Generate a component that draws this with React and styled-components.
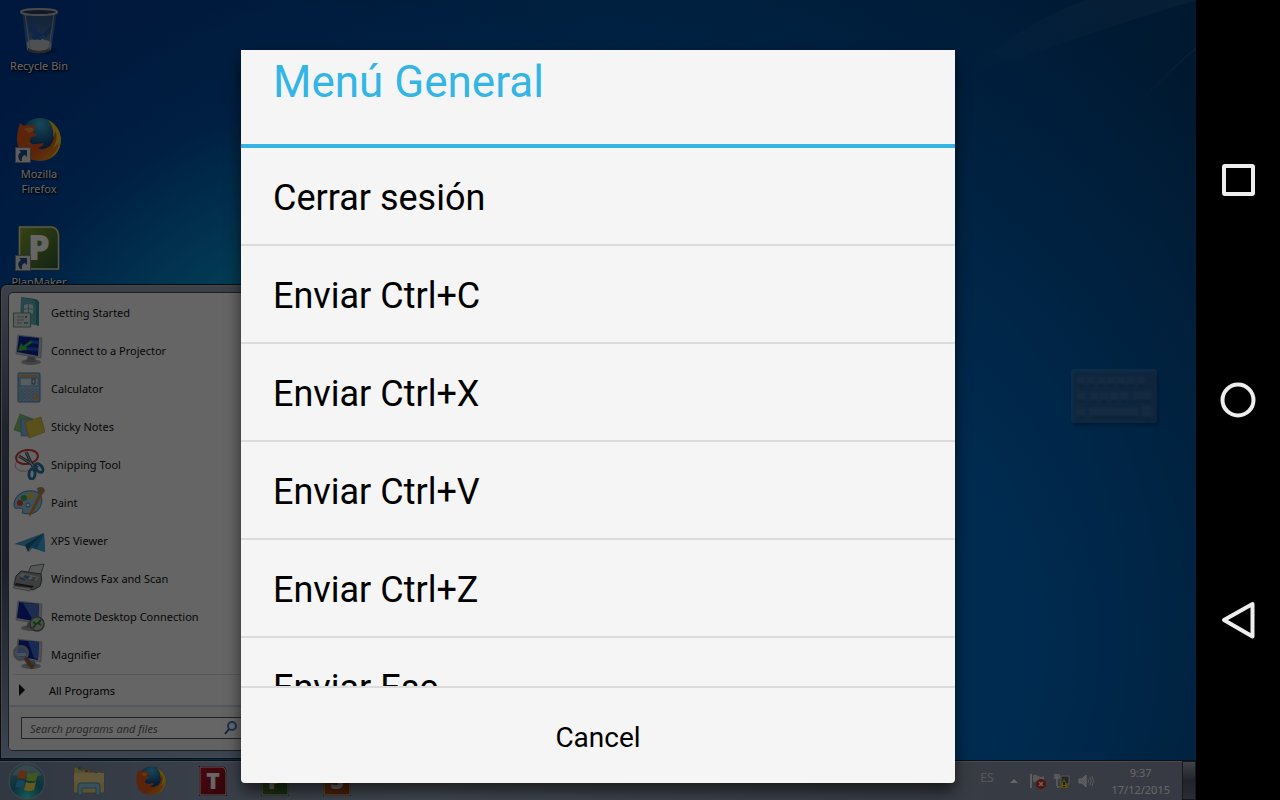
import { useState } from "react";
import styled, { createGlobalStyle } from "styled-components";

const desktopItems = [
  { label: "Recycle Bin", icon: <BinIcon /> },
  { label: "Mozilla Firefox", icon: <FirefoxIcon size={48} />, shortcut: true },
  {
    label: "PlanMaker",
    icon: <OfficeIcon size={48} letter="P" from="#8aa82c" to="#2c5a34" />,
    shortcut: true,
  },
];

const programs = [
  { label: "Getting Started", icon: <GettingStartedIcon /> },
  { label: "Connect to a Projector", icon: <ProjectorIcon /> },
  { label: "Calculator", icon: <CalculatorIcon /> },
  { label: "Sticky Notes", icon: <NotesIcon /> },
  { label: "Snipping Tool", icon: <SnippingIcon /> },
  { label: "Paint", icon: <PaintIcon /> },
  { label: "XPS Viewer", icon: <XpsIcon /> },
  { label: "Windows Fax and Scan", icon: <FaxIcon /> },
  { label: "Remote Desktop Connection", icon: <RemoteIcon /> },
  { label: "Magnifier", icon: <MagnifierIcon /> },
];

const actions = [
  "Cerrar sesión",
  "Enviar Ctrl+C",
  "Enviar Ctrl+X",
  "Enviar Ctrl+V",
  "Enviar Ctrl+Z",
  "Enviar Esc",
];

export default function App() {
  const [query, setQuery] = useState("");

  return (
    <Device>
      <GlobalStyle />
      <Screen>
        <Desktop>
          <IconColumn>
            {desktopItems.map((item) => (
              <DesktopItem key={item.label}>
                <IconFrame>
                  {item.icon}
                  {item.shortcut && (
                    <Shortcut>
                      <ShortcutIcon />
                    </Shortcut>
                  )}
                </IconFrame>
                <span>{item.label}</span>
              </DesktopItem>
            ))}
          </IconColumn>
          <LightRays />
          <KeyboardButton aria-label="Keyboard">
            <KeyboardIcon />
          </KeyboardButton>
          <StartMenu>
            <ProgramPanel>
              <ProgramList>
                {programs.map((program) => (
                  <li key={program.label}>
                    <Program>
                      {program.icon}
                      {program.label}
                    </Program>
                  </li>
                ))}
              </ProgramList>
              <AllPrograms>
                <svg width="6" height="12" viewBox="0 0 6 12">
                  <path d="M0 0L6 6L0 12Z" fill="#111" />
                </svg>
                All Programs
              </AllPrograms>
              <SearchArea>
                <SearchBox>
                  <input
                    type="text"
                    aria-label="Search programs and files"
                    placeholder="Search programs and files"
                    value={query}
                    onChange={(e) => setQuery(e.target.value)}
                  />
                  <svg width="14" height="14" viewBox="0 0 14 14" fill="none">
                    <circle cx="8" cy="5" r="4" stroke="#3d83c4" strokeWidth="2" />
                    <path d="M5 8L1 13" stroke="#2a559c" strokeWidth="2" />
                  </svg>
                </SearchBox>
              </SearchArea>
            </ProgramPanel>
          </StartMenu>
        </Desktop>
        <Taskbar>
          <StartButton aria-label="Start">
            <OrbIcon />
          </StartButton>
          <TaskButton aria-label="Explorer">
            <FolderIcon />
          </TaskButton>
          <TaskButton aria-label="Firefox">
            <FirefoxIcon size={32} />
          </TaskButton>
          <TaskButton aria-label="TextMaker">
            <OfficeIcon size={32} letter="T" from="#b81428" to="#78101c" />
          </TaskButton>
          <TaskButton aria-label="PlanMaker">
            <OfficeIcon size={32} letter="P" from="#66902c" to="#3c6a34" />
          </TaskButton>
          <TaskButton aria-label="Presentations">
            <OfficeIcon size={32} letter="S" from="#e8681c" to="#a8481c" />
          </TaskButton>
          <Tray>
            <Language>ES</Language>
            <TrayIcons>
              <svg width="8" height="4" viewBox="0 0 8 4">
                <path d="M4 0L8 4H0Z" fill="#fff" />
              </svg>
              <FlagIcon />
              <NetworkIcon />
              <SpeakerIcon />
            </TrayIcons>
            <Clock>
              <span>9:37</span>
              <span>17/12/2015</span>
            </Clock>
            <ShowDesktop aria-label="Show desktop" />
          </Tray>
        </Taskbar>
        <Dim>
          <Dialog role="dialog" aria-labelledby="menu-title">
            <Title id="menu-title">Menú General</Title>
            <ActionList>
              {actions.map((action) => (
                <li key={action}>
                  <Action>{action}</Action>
                </li>
              ))}
            </ActionList>
            <Cancel>Cancel</Cancel>
          </Dialog>
        </Dim>
      </Screen>
      <NavBar>
        <NavButton aria-label="Recent">
          <svg width="36" height="36" viewBox="0 0 36 36" fill="none">
            <rect x="4" y="4" width="29" height="28" rx="1" stroke="#eee" strokeWidth="4" />
          </svg>
        </NavButton>
        <NavButton aria-label="Home">
          <svg width="36" height="36" viewBox="0 0 36 36" fill="none">
            <circle cx="18" cy="18" r="15.5" stroke="#eee" strokeWidth="4" />
          </svg>
        </NavButton>
        <NavButton aria-label="Back">
          <svg width="36" height="40" viewBox="0 0 36 40" fill="none">
            <path
              d="M4 20L32.5 4V36.500Z"
              stroke="#eee"
              strokeWidth="4"
              strokeLinejoin="round"
            />
          </svg>
        </NavButton>
      </NavBar>
    </Device>
  );
}

function BinIcon() {
  return (
    <svg width="48" height="48" viewBox="-1 0 48 48">
      <defs>
        <linearGradient id="bin" x1="0" y1="0" x2="0" y2="1">
          <stop offset="0" stopColor="#2c5484" />
          <stop offset="0.7" stopColor="#4878b0" />
          <stop offset="1" stopColor="#a0b0c4" />
        </linearGradient>
      </defs>
      <ellipse cx="27" cy="42" rx="14" ry="4" fill="#000" opacity="0.25" />
      <path d="M6 4L11 42Q23 48 35 42L41 4Z" fill="url(#bin)" />
      <path d="M11 35Q14 30 19 32Q25 29 29 32Q34 32 35 36L34 42Q23 47 12 42Z" fill="#c4c8cc" />
      <path d="M12 40Q23 46 34 40L34 43Q23 48 12 43Z" fill="#666" />
      <path d="M13 17Q19 13 20 20L22 24L28 25L25 32L16 31L17 25Q11 24 13 17Z" fill="#2860b4" />
      <path d="M37 15L27 26L30 30L36 20Z" fill="#2c5894" />
      <path d="M9 6L14 40M38 6L33 40" stroke="#90a8c4" strokeWidth="1" fill="none" />
      <ellipse cx="23" cy="4" rx="18" ry="3" fill="#28405c" stroke="#b8bcc0" strokeWidth="2" />
    </svg>
  );
}

function FirefoxIcon({ size }) {
  return (
    <svg width={size} height={size} viewBox="0 0 48 48">
      <defs>
        <linearGradient id="fox" x1="0" y1="0" x2="1" y2="1">
          <stop offset="0" stopColor="#e8601c" />
          <stop offset="0.6" stopColor="#e4581c" />
          <stop offset="1" stopColor="#f0b01c" />
        </linearGradient>
        <radialGradient id="globe" cx="0.5" cy="0.15" r="0.8">
          <stop offset="0" stopColor="#3cb4d8" />
          <stop offset="0.6" stopColor="#14508c" />
          <stop offset="1" stopColor="#102c60" />
        </radialGradient>
      </defs>
      <circle cx="25" cy="22" r="20" fill="url(#globe)" />
      <path
        d="M5 7L9 10Q14 8 18 10L19 8L20 14Q18 15 18 17L22 18Q22 20 17 21Q14 23 15 26Q17 29 21 28L28 27Q30 29 23 32Q28 35 35 30Q41 23 38 14L34 5Q45 11 46 23Q45 44 25 45Q4 44 2 25Q2 15 5 7Z"
        fill="url(#fox)"
      />
      <path
        d="M33 4Q40 12 38 21Q41 17 40 14Q44 23 38 32Q43 29 44 25Q43 37 34 42Q46 37 46 22Q44 9 33 4Z"
        fill="#f4cc28"
      />
      <path d="M9 13Q15 10 19 13Q17 16 14 17Z" fill="#f48c3c" />
    </svg>
  );
}

function OfficeIcon({ size, letter, from, to }) {
  const id = `office-${letter}-${size}`;
  return (
    <OfficeSvg width={size} height={size} viewBox="0 0 32 32">
      <defs>
        <linearGradient id={id} x1="0" y1="0" x2="1" y2="1">
          <stop offset="0" stopColor={from} />
          <stop offset="1" stopColor={to} />
        </linearGradient>
      </defs>
      <path d="M2 1H24Q29 1 30 7V31H2Z" fill={to} />
      <path d="M3 2H24Q28 2 29 7V30H3Z" fill={`url(#${id})`} stroke="#ddd" strokeWidth="1" />
      <text
        x="16"
        y="24"
        textAnchor="middle"
        fontFamily="Open Sans"
        fontWeight="800"
        fontSize="23"
        fill="#fff"
      >
        {letter}
      </text>
    </OfficeSvg>
  );
}

function ShortcutIcon() {
  return (
    <svg width="16" height="16" viewBox="0 0 16 16">
      <rect x="0.5" y="0.5" width="15" height="15" fill="#e8e8e8" stroke="#888" />
      <path
        d="M5 14Q1 8 6 5L4 3H12V10L10 8Q6 9 7 14Z"
        fill="#244f8c"
      />
    </svg>
  );
}

function GettingStartedIcon() {
  return (
    <svg width="32" height="32" viewBox="0 0 32 32">
      <path d="M8 1L22 3Q27 4 26 9V30L20 28L8 31Z" fill="#2c98a0" />
      <path d="M8 1L20 4Q23 5 23 9V29L7 26Z" fill="#68acb8" />
      <path d="M11 9L15 8V12L11 13ZM16 8L20 9V13L16 12ZM11 14L15 13V17L11 17ZM16 13L20 14V18L16 17Z" fill="#d0ecec" />
      <rect x="0.500" y="17" width="17" height="14" fill="#dce4e0" stroke="#609c80" />
      <path d="M4 21H11M4 24H11M4 27H9" stroke="#999" />
      <rect x="11" y="26" width="4" height="2" fill="#38b0e0" />
      <rect x="12" y="20" width="2" height="2" fill="#777" />
    </svg>
  );
}

function ScreenShape() {
  return (
    <>
      <ellipse cx="18" cy="28" rx="10" ry="3" fill="#a4a8ac" />
      <path d="M15 22L22 23L23 28H13Z" fill="#888c90" />
      <path d="M5 1L29 4L28 24L3 20Z" fill="#c4c8cc" stroke="#8c9094" strokeWidth="0.6" />
      <path d="M6 2L26 4L25 22L4 18Z" fill="#1024a0" />
    </>
  );
}

function ProjectorIcon() {
  return (
    <svg width="32" height="32" viewBox="0 0 32 32">
      <ScreenShape />
      <path d="M17 6L26 7V10L15 9ZM13 13L25 14V17L13 16Z" fill="#1460d0" />
      <path d="M20 8L13 13L14 16L5 17L8 9L10 12L17 7Z" fill="#3cc83c" />
    </svg>
  );
}

function CalculatorIcon() {
  return (
    <svg width="32" height="32" viewBox="0 0 32 32">
      <rect x="5" y="1" width="22" height="29" rx="1" fill="#a0c8e4" stroke="#4880ac" />
      <rect x="7" y="3" width="18" height="2" fill="#e8a030" />
      <rect x="7" y="6" width="18" height="8" fill="#d8e8f0" stroke="#6898bc" />
      <rect x="19" y="7" width="3" height="5" fill="none" stroke="#38689c" />
      {[17, 20, 23, 26].map((y) =>
        [7, 11, 15, 19, 23].map((x) => (
          <rect key={`${x}-${y}`} x={x} y={y} width="2" height="2" fill="#e0e8f0" stroke="#5888b0" strokeWidth="0.6" />
        ))
      )}
      <rect x="22" y="23" width="3" height="5" fill="#e8a030" />
    </svg>
  );
}

function NotesIcon() {
  return (
    <svg width="32" height="32" viewBox="0 0 32 32">
      <path d="M7 4L20 9L14 24L1 20Z" fill="#88c478" stroke="#5ca45c" strokeWidth="0.6" />
      <path d="M8 9H20V26H8Z" fill="#88b8e4" stroke="#4c88c0" strokeWidth="0.6" />
      <path d="M12 12L28 7L32 22L16 28Z" fill="#e0c848" stroke="#b09828" strokeWidth="0.6" />
    </svg>
  );
}

function SnippingIcon() {
  return (
    <svg width="32" height="32" viewBox="0 0 32 32" fill="none">
      <path d="M4 13Q-1 20 8 23Q13 24 17 22" stroke="#e09c9c" strokeWidth="1" />
      <ellipse cx="14" cy="9" rx="11" ry="7" fill="#fff" fillOpacity="0.4" stroke="#d43c3c" strokeWidth="2" transform="rotate(-8 14 9)" />
      <path d="M13 4L21 21M6 8L25 20" stroke="#4c545c" strokeWidth="3" />
      <path d="M13 4L21 21M6 8L25 20" stroke="#b0b8c0" strokeWidth="1" />
      <ellipse cx="26" cy="20" rx="5" ry="3" transform="rotate(50 26 20)" stroke="#2878b0" strokeWidth="3" />
      <ellipse cx="19" cy="26" rx="3" ry="5" transform="rotate(5 19 26)" stroke="#2878b0" strokeWidth="3" />
    </svg>
  );
}

function PaintIcon() {
  return (
    <svg width="32" height="32" viewBox="0 0 32 32">
      <path d="M14 5Q29 3 29 15Q27 28 15 28L9 27Q12 22 6 22Q0 24 1 17Q3 7 14 5Z" fill="#9cc8e4" stroke="#4488b0" />
      <circle cx="7" cy="17" r="3" fill="#d44830" />
      <circle cx="11" cy="12" r="3" fill="#48a83c" />
      <circle cx="18" cy="10" r="3" fill="#f0c028" />
      <circle cx="15" cy="19" r="2" fill="#e8f4fc" stroke="#4488b0" />
      <path d="M26 8L29 9L19 28L16 31L17 26Z" fill="#d88828" />
      <path d="M24 2Q31 -1 32 5L29 9L25 8Z" fill="#b08860" />
    </svg>
  );
}

function XpsIcon() {
  return (
    <svg width="32" height="32" viewBox="0 0 32 32">
      <path d="M12 22L16 28L21 22Z" fill="#98a4ac" />
      <path d="M1 20L31 9L16 23Z" fill="#48a4d4" />
      <path d="M31 9L16 23L32 28Z" fill="#2888c4" />
      <path d="M31 9L12 21L15 28L17 23Z" fill="#186894" />
      <path d="M31 9L24 25L32 28Z" fill="#3ca8dc" />
    </svg>
  );
}

function FaxIcon() {
  return (
    <svg width="32" height="32" viewBox="0 0 32 32">
      <path d="M18 4L31 2L27 15L15 11Z" fill="#d8dcdc" stroke="#777" />
      <path d="M3 14L8 9L28 12Q30 18 27 24L20 28L1 23Z" fill="#989ca0" stroke="#555" />
      <path d="M6 14L9 11L26 15L23 19Z" fill="#c4c8cc" />
      <path d="M12 13L17 14L15 17L10 15Z" fill="#3888c0" />
      <path d="M3 21L21 24L19 26L2 23Z" fill="#333" />
      <path d="M1 24L18 26L17 29L0 26Z" fill="#d0d4d4" stroke="#666" strokeWidth="0.5" />
      <path d="M19 16H23M18 18H22M7 16L12 18" stroke="#555" />
    </svg>
  );
}

function RemoteIcon() {
  return (
    <svg width="32" height="32" viewBox="0 0 32 32">
      <ScreenShape />
      <path d="M10 3L26 4L25 21L20 20Z" fill="#4870cc" />
      <circle cx="24" cy="24" r="7" fill="#b8c0b8" stroke="#667068" strokeWidth="1.500" />
      <path d="M20 22L23 24L20 28M28 20L25 23L28 25" stroke="#289030" strokeWidth="2" fill="none" />
    </svg>
  );
}

function MagnifierIcon() {
  return (
    <svg width="32" height="32" viewBox="0 0 32 32">
      <ScreenShape />
      <path d="M15 3L26 4L25 21L21 20Z" fill="#3c6cd4" />
      <circle cx="8" cy="15" r="7" fill="#90b0e0" fillOpacity="0.8" stroke="#a0a4a8" strokeWidth="2" />
      <path d="M3 15H13V18H4Z" fill="#b0c8ec" />
      <path d="M13 21L19 29" stroke="#986444" strokeWidth="4" strokeLinecap="round" />
    </svg>
  );
}

function OrbIcon() {
  return (
    <svg width="38" height="38" viewBox="0 0 38 38">
      <defs>
        <radialGradient id="orb" cx="0.5" cy="0.95" r="0.9">
          <stop offset="0" stopColor="#38e0d8" />
          <stop offset="0.5" stopColor="#1c7c94" />
          <stop offset="1" stopColor="#6c9cac" />
        </radialGradient>
      </defs>
      <circle cx="19" cy="19" r="18" fill="url(#orb)" stroke="#a0b4bc" strokeWidth="1" />
      <path d="M4 13Q19 -7 34 13Q27 16 19 15Q11 14 4 13Z" fill="#fff" opacity="0.3" />
      <path d="M11 9Q15 7 19 10L17 18Q13 15 9 17Z" fill="#f47434" />
      <path d="M20 11Q25 13 30 10L28 19Q22 20 18 18Z" fill="#a4dc48" />
      <path d="M9 19Q13 16 17 20L15 27Q11 24 7 26Z" fill="#40a8e4" />
      <path d="M18 20Q22 22 28 20L26 28Q20 30 16 28Z" fill="#fcdc4c" />
    </svg>
  );
}

function FolderIcon() {
  return (
    <svg width="32" height="32" viewBox="0 0 32 32">
      <path d="M1 3L5 2L6 5H11L12 4L16 5V7H22L23 6L28 7V9H31V28H1Z" fill="#d8c478" stroke="#98844c" strokeWidth="0.6" />
      <path d="M5 2H8V4H5Z" fill="#28a838" />
      <path d="M12 5H15V7H12Z" fill="#d45838" />
      <path d="M22 7H25V9H22Z" fill="#3888d4" />
      <path d="M1 8H31V27H1Z" fill="#f0dc90" />
      <path d="M1 17H31V27H1Z" fill="#dcc878" opacity="0.6" />
      <path d="M5 30V21Q5 18 8 18H24Q27 18 27 21V30H23V23H9V30Z" fill="#90c8e4" stroke="#4c94bc" />
    </svg>
  );
}

function FlagIcon() {
  return (
    <svg width="16" height="16" viewBox="0 0 16 16">
      <path d="M1 1V15" stroke="#eee" strokeWidth="2" />
      <path d="M3 2Q6 1 8 3Q11 5 14 3V10Q11 11 8 9Q6 8 3 9Z" fill="#ddd" />
      <circle cx="11" cy="11" r="5" fill="#d42c20" />
      <path d="M9 9L13 13M13 9L9 13" stroke="#fff" strokeWidth="1.500" />
    </svg>
  );
}

function NetworkIcon() {
  return (
    <svg width="16" height="16" viewBox="0 0 16 16" fill="none">
      <path d="M1 1V5H5V1M3 1V13M3 14H8" stroke="#eee" strokeWidth="1.500" />
      <path d="M7 3H15V11H7Z" stroke="#ddd" fill="#555c66" />
      <path d="M10 6L15 15H5Z" fill="#f0d020" stroke="#a89010" strokeWidth="0.5" />
      <path d="M10 9V12M10 13V14" stroke="#222" strokeWidth="1.500" />
    </svg>
  );
}

function SpeakerIcon() {
  return (
    <svg width="16" height="16" viewBox="0 0 16 16" fill="none">
      <path d="M1 6H4L8 2V14L4 10H1Z" fill="#ddd" stroke="#fff" />
      <path d="M10 6Q11 8 10 10M12 4Q14 8 12 12M14 3Q17 8 14 13" stroke="#ddd" />
    </svg>
  );
}

function KeyboardIcon() {
  return (
    <svg width="96" height="64" viewBox="0 0 96 64">
      <defs>
        <filter id="soft">
          <feGaussianBlur stdDeviation="1" />
        </filter>
      </defs>
      <rect x="7" y="8" width="86" height="54" rx="3" fill="#001840" opacity="0.3" filter="url(#soft)" />
      <rect x="5" y="5" width="86" height="54" rx="3" fill="#7aa0c8" opacity="0.3" />
      <g fill="#a0c0e0" opacity="0.12" filter="url(#soft)">
        {[11, 21, 31, 41, 51, 61, 71].map((x) => (
          <rect key={x} x={x} y="13" width="8" height="8" rx="1" />
        ))}
        {[11, 24, 34, 44, 54].map((x) => (
          <rect key={x} x={x} y="28" width="8" height="9" rx="1" />
        ))}
        <rect x="68" y="28" width="17" height="9" rx="1" />
        <rect x="11" y="44" width="8" height="9" rx="1" />
        <rect x="23" y="44" width="49" height="9" rx="1" />
        <rect x="76" y="42" width="10" height="12" rx="1" />
      </g>
      <path
        d="M12 21H18M22 21H28M32 21H38M42 21H48M52 21H58M62 21H68M72 21H78M12 37H18M25 37H31M35 37H41M45 37H51M55 37H61M69 37H84M12 53H18M24 53H71M77 54H85"
        stroke="#002050"
        strokeWidth="2"
        opacity="0.3"
        filter="url(#soft)"
      />
    </svg>
  );
}

function LightRays() {
  return (
    <RaysSvg width="300" height="160" viewBox="0 0 300 160" fill="none">
      <defs>
        <linearGradient id="ray" x1="0" y1="1" x2="1" y2="0">
          <stop offset="0" stopColor="#7ab0d0" stopOpacity="0" />
          <stop offset="1" stopColor="#7ab0d0" stopOpacity="0.15" />
        </linearGradient>
      </defs>
      <path d="M60 80Q130 20 190 0H300Q170 40 60 80Z" fill="url(#ray)" />
      <path d="M240 106Q270 74 300 48" stroke="url(#ray)" strokeWidth="2" />
    </RaysSvg>
  );
}

const GlobalStyle = createGlobalStyle`
  * {
    box-sizing: border-box;
  }

  body {
    margin: 0;
    background: #000;
  }

  ul {
    list-style: none;
    margin: 0;
    padding: 0;
  }

  button {
    border: none;
    background: none;
    padding: 0;
    margin: 0;
    font: inherit;
    color: inherit;
  }

  svg {
    display: block;
    flex-shrink: 0;
  }
`;

const OfficeSvg = styled.svg`
  overflow: visible;
  text-shadow: none;
`;

const RaysSvg = styled.svg`
  position: absolute;
  top: 0;
  right: 0;
`;

const Device = styled.div`
  display: flex;
  height: 100vh;
  overflow: hidden;
  font-family: "Noto Sans", sans-serif;
  font-size: 11px;
`;

const Screen = styled.main`
  position: relative;
  flex: 1;
  min-width: 0;
  display: flex;
  flex-direction: column;
  background: radial-gradient(
      ellipse 42% 60% at 28% 58%,
      rgba(20, 210, 240, 1) 0%,
      rgba(10, 170, 225, 0.8) 40%,
      rgba(0, 110, 200, 0.3) 75%,
      rgba(0, 80, 180, 0) 100%
    ),
    radial-gradient(
      ellipse 62% 90% at 60% 80%,
      #0078d8 0%,
      #006cc8 40%,
      rgba(0, 84, 172, 0) 100%
    ),
    linear-gradient(100deg, #003c98 0%, #004c98 45%, #004284 80%, #083c6c 100%);
`;

const Desktop = styled.div`
  position: relative;
  flex: 1;
  min-height: 0;
  display: flex;
  justify-content: space-between;
  align-items: center;
`;

const IconColumn = styled.div`
  align-self: flex-start;
  display: grid;
  grid-template-columns: 78px;
  grid-auto-rows: 108px;
`;

const DesktopItem = styled.button`
  display: flex;
  flex-direction: column;
  align-items: center;
  gap: 2px;
  padding: 8px 8px 0;
  color: #fff;
  line-height: 15px;
  text-shadow: 1px 1px 2px #000, 0 1px 3px #000;

  span {
    max-width: 62px;
  }
`;

const IconFrame = styled.span`
  position: relative;
  display: block;
`;

const Shortcut = styled.span`
  position: absolute;
  left: 0;
  bottom: 1px;
`;

const KeyboardButton = styled.button`
  margin: 32px 34px 0 0;
`;

const StartMenu = styled.section`
  position: absolute;
  left: 0;
  bottom: 1px;
  width: 410px;
  padding: 7px;
  border: 1px solid #222;
  border-radius: 7px 7px 0 0;
  background: linear-gradient(#98a4b8 0%, #505c70 30%, #445064 60%, #98acc8 100%);
  box-shadow: inset 0 0 0 1px #a8b4c4;
`;

const ProgramPanel = styled.div`
  width: 254px;
  border: 1px solid #444c58;
  border-radius: 5px;
  background: #fcfcfc;
  overflow: hidden;
`;

const ProgramList = styled.ul`
  border-bottom: 1px solid #d4dce4;
  padding-bottom: 1px;
  margin-left: 4px;
`;

const Program = styled.button`
  display: flex;
  align-items: center;
  gap: 6px;
  width: 100%;
  height: 38px;
  color: #111;
`;

const AllPrograms = styled.button`
  display: flex;
  align-items: center;
  gap: 24px;
  width: 100%;
  height: 30px;
  padding-left: 10px;
  color: #000;
`;

const SearchArea = styled.div`
  padding: 10px 12px 11px;
  border-top: 2px solid #d0dcf0;
  background: #f4f6f8;
`;

const SearchBox = styled.label`
  display: flex;
  align-items: center;
  height: 22px;
  padding: 0 10px 0 8px;
  border: 1px solid #555;
  background: #fff;

  input {
    flex: 1;
    min-width: 0;
    border: none;
    outline: none;
    padding: 0;
    background: none;
    font: italic 11px "Noto Sans", sans-serif;
  }

  input::placeholder {
    color: #666;
    opacity: 1;
  }
`;

const Taskbar = styled.footer`
  display: flex;
  align-items: center;
  height: 40px;
  border-top: 1px solid #222c38;
  box-shadow: inset 0 1px 0 #b0bccc;
  background: linear-gradient(90deg, #7c8ca4 0%, #8c9cb4 15%, #a4b4c8 35%, #8c98ac 80%, #8890a4 100%);
`;

const StartButton = styled.button`
  display: flex;
  justify-content: center;
  width: 54px;
  margin-right: 4px;
`;

const TaskButton = styled.button`
  display: flex;
  justify-content: center;
  width: 62px;
`;

const Tray = styled.div`
  display: flex;
  align-items: center;
  align-self: stretch;
  margin-left: auto;
  color: #fff;
`;

const Language = styled.span`
  color: #d8dce0;
  font-size: 12px;
  padding-bottom: 6px;
`;

const TrayIcons = styled.div`
  display: flex;
  align-items: center;
  gap: 8px;
  margin: 0 17px;

  svg:first-child {
    margin-right: 4px;
  }
`;

const Clock = styled.div`
  display: flex;
  flex-direction: column;
  align-items: center;
  line-height: 17px;
`;

const ShowDesktop = styled.button`
  align-self: stretch;
  width: 14px;
  margin-left: 12px;
  border: 1px solid #384048;
  background: linear-gradient(#a0a8b4, #505864 50%, #687080);
`;

const Dim = styled.div`
  position: absolute;
  inset: 0;
  display: flex;
  justify-content: center;
  padding: 50px 16px 17px;
  background: rgba(0, 0, 0, 0.6);
`;

const Dialog = styled.section`
  display: flex;
  flex-direction: column;
  width: 100%;
  max-width: 714px;
  border-radius: 0 0 4px 4px;
  background: #f5f5f5;
  box-shadow: 0 8px 16px rgba(0, 0, 0, 0.6);
  font-family: Roboto, sans-serif;
  color: #000;
  overflow: hidden;
`;

const Title = styled.h1`
  margin: 0;
  padding: 0 32px 30px;
  border-bottom: 4px solid #33b5e5;
  font-size: 44px;
  font-weight: 400;
  line-height: 64px;
  color: #33b5e5;
`;

const ActionList = styled.ul`
  flex: 1;
  min-height: 0;
  overflow: hidden;
`;

const Action = styled.button`
  display: block;
  width: 100%;
  height: 98px;
  padding: 4px 32px 0;
  border-bottom: 2px solid #dcdcdc;
  font-size: 36px;
  text-align: left;
`;

const Cancel = styled.button`
  height: 97px;
  flex-shrink: 0;
  padding-top: 4px;
  border-top: 2px solid #dcdcdc;
  font-size: 28px;
`;

const NavBar = styled.nav`
  display: flex;
  flex-direction: column;
  width: 84px;
  padding: 70px 0;
  background: #000;
`;

const NavButton = styled.button`
  flex: 1;
  display: flex;
  align-items: center;
  justify-content: center;
`;
